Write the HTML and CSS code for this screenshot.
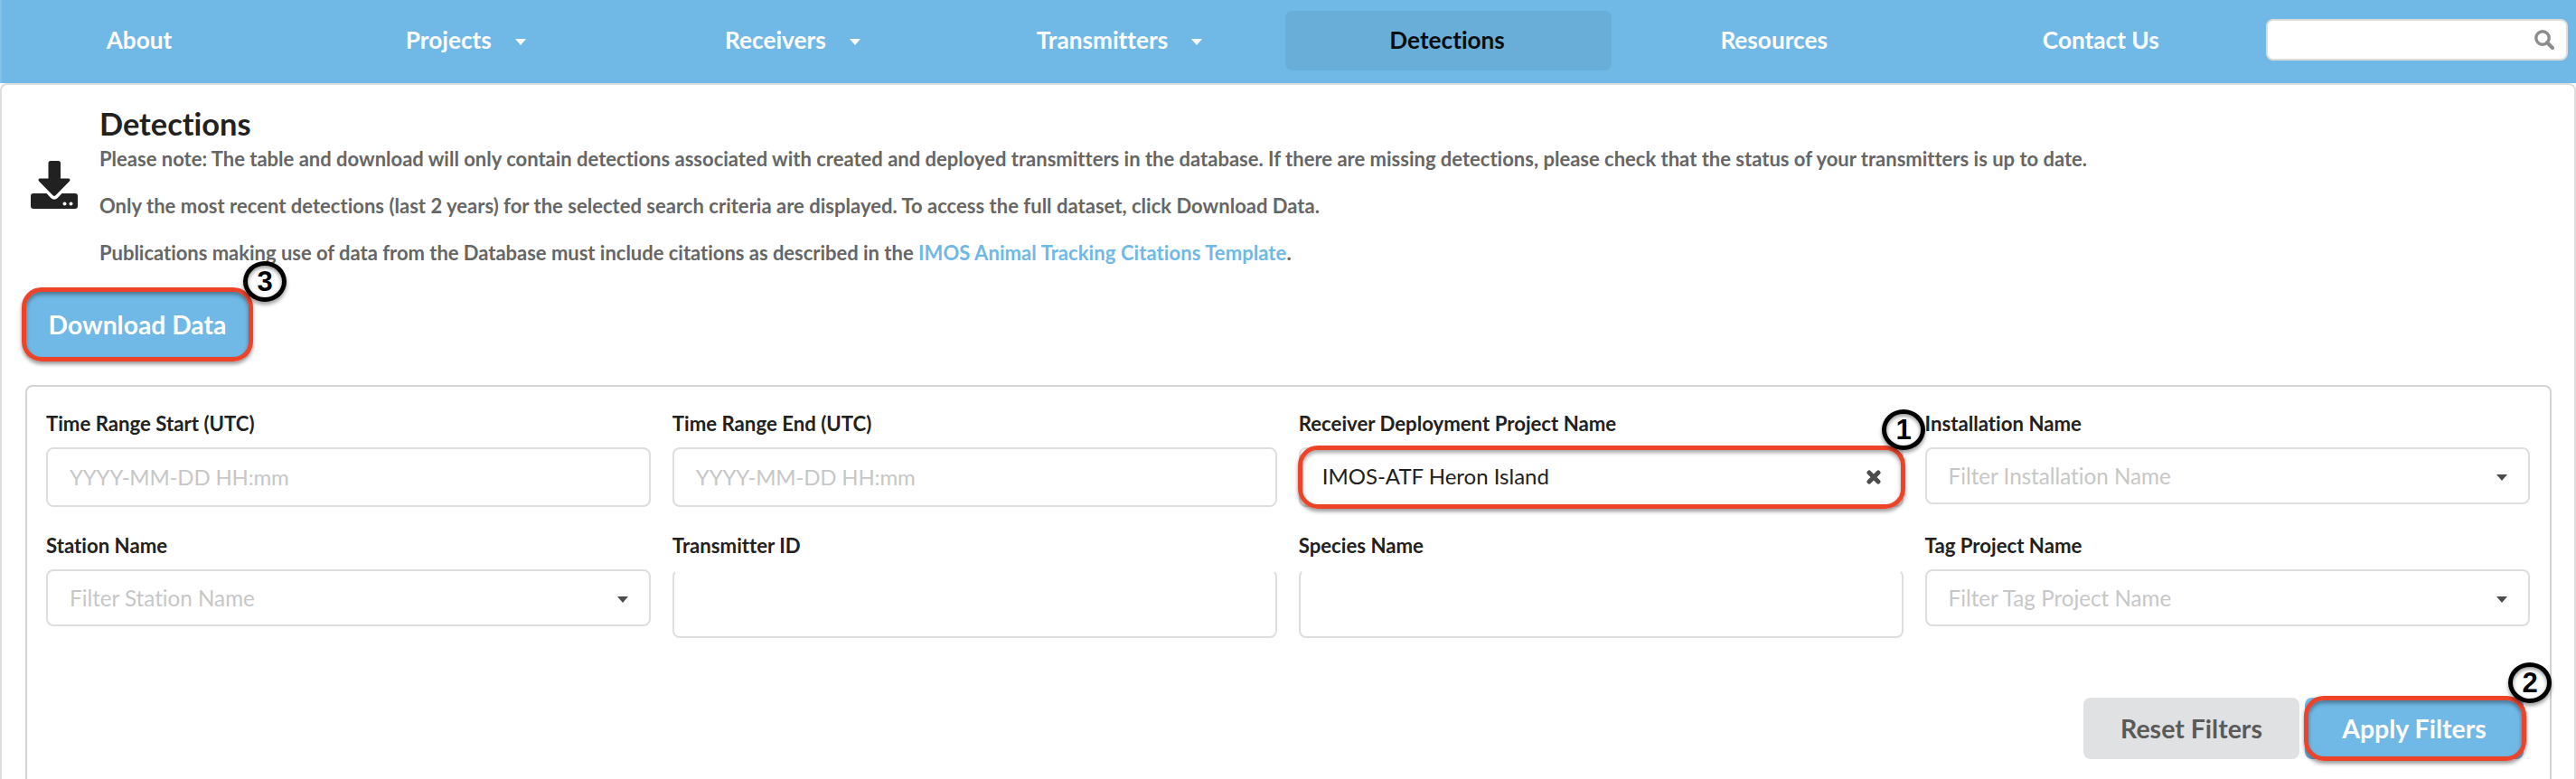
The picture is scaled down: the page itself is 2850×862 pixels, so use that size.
FILE: index.html
```
<!DOCTYPE html>
<html lang="en">
<head>
<meta charset="utf-8">
<title>Detections</title>
<link rel="stylesheet" href="styles.css">
</head>
<body>
<nav class="nav">
  <a class="nav-item nav-first">About</a>
  <a class="nav-item has-menu">Projects<i class="caret"></i></a>
  <a class="nav-item has-menu">Receivers<i class="caret"></i></a>
  <a class="nav-item has-menu">Transmitters<i class="caret"></i></a>
  <a class="nav-item active">Detections</a>
  <a class="nav-item">Resources</a>
  <a class="nav-item">Contact Us</a>
  <div class="search">
    <svg class="search-icon" viewBox="0 0 22 22"><circle cx="9" cy="9" r="7.2" fill="none" stroke="#8c8c8c" stroke-width="3.4"/><path d="M14 14l6 6" stroke="#8c8c8c" stroke-width="4" stroke-linecap="round"/></svg>
  </div>
</nav>
<main class="page">
  <header class="head">
    <svg class="dl-icon" viewBox="0 0 52 53">
      <path d="M3 36h14.5l5 5.2a5 5 0 0 0 7 0l5-5.2H49a3 3 0 0 1 3 3v11a3 3 0 0 1-3 3H3a3 3 0 0 1-3-3V39a3 3 0 0 1 3-3z"/>
      <path d="M22 0h8.500a2.500 2.500 0 0 1 2.500 2.500V19.500h8.700c1.700 0 2.400 1.900 1.200 3.100L27.700 38a2.400 2.400 0 0 1-3.400 0L9.100 22.600c-1.200-1.200-.5-3.100 1.200-3.100h9.200V2.500A2.500 2.500 0 0 1 22 0z"/>
      <circle cx="37.500" cy="47.500" r="2" fill="#fff"/><circle cx="44.500" cy="47.500" r="2" fill="#fff"/>
    </svg>
    <div class="head-text">
      <h1 class="title">Detections</h1>
      <p class="note">Please note: The table and download will only contain detections associated with created and deployed transmitters in the database. If there are missing detections, please check that the status of your transmitters is up to date.</p>
      <p class="note recent">Only the most recent detections (last 2 years) for the selected search criteria are displayed. To access the full dataset, click Download Data.</p>
      <p class="note cite">Publications making use of data from the Database must include citations as described in the <a class="link">IMOS Animal Tracking Citations Template</a>.</p>
    </div>
  </header>
  <div class="marked download">
    <button class="btn primary">Download Data</button>
    <span class="outline"></span><span class="badge">3</span>
  </div>
  <section class="filters">
    <div class="grid">
      <div class="field"><label class="label">Time Range Start (UTC)</label><div class="input">YYYY-MM-DD HH:mm</div></div>
      <div class="field"><label class="label">Time Range End (UTC)</label><div class="input">YYYY-MM-DD HH:mm</div></div>
      <div class="field marked project"><label class="label">Receiver Deployment Project Name</label>
        <div class="input select filled">IMOS-ATF Heron Island<svg class="clear" viewBox="0 0 16 16"><path d="M3 3l10 10M13 3L3 13" stroke="#4d4d4d" stroke-width="5" stroke-linecap="round"/></svg></div>
        <span class="outline"></span><span class="badge">1</span></div>
      <div class="field"><label class="label">Installation Name</label><div class="input select">Filter Installation Name<i class="caret"></i></div></div>
      <div class="field"><label class="label">Station Name</label><div class="input select">Filter Station Name<i class="caret"></i></div></div>
      <div class="field"><label class="label">Transmitter ID</label><div class="input area"></div></div>
      <div class="field"><label class="label">Species Name</label><div class="input area"></div></div>
      <div class="field"><label class="label">Tag Project Name</label><div class="input select">Filter Tag Project Name<i class="caret"></i></div></div>
    </div>
    <div class="actions">
      <button class="btn reset">Reset Filters</button>
      <div class="marked apply"><button class="btn primary">Apply Filters</button><span class="outline"></span><span class="badge">2</span></div>
    </div>
  </section>
</main>
</body>
</html>
```
FILE: styles.css
```
* { box-sizing: border-box; }
body {
  margin: 0;
  background: #fff;
  color: #212121;
  font-family: Lato, "Liberation Sans", sans-serif;
  font-variant-ligatures: none;
}

/* Navigation bar */
.nav {
  display: flex;
  align-items: flex-start;
  height: 92px;
  padding: 12px 9px 0 0;
  background: #70b8e5;
  border-left: 2px solid #84c2e9;
}
.nav-item {
  display: flex;
  align-items: center;
  justify-content: center;
  width: 361.6px;
  height: 66px;
  padding: 0 3px 3px 0;
  border-radius: 8px;
  color: #fff;
  font-size: 26.2px;
  font-weight: 700;
}
.has-menu { padding-right: 5px; }
.nav-first { width: 335px; padding-right: 31px; }
.nav-item.active { background: #69aed9; color: #0b0e10; }
.caret {
  border: 6.5px solid transparent;
  border-top: 7px solid;
  border-bottom: 0;
}
.nav .caret { margin: 5px 0 0 26px; }

.search {
  display: flex;
  align-items: center;
  justify-content: flex-end;
  width: 334px;
  height: 46px;
  margin: 9px 0 0 auto;
  padding-right: 13px;
  background: #fff;
  border: 2px solid #ddd;
  border-radius: 8px;
}
.search-icon { width: 22px; height: 22px; }

/* Page panel */
.page {
  height: 770px;
  padding: 22.5px 25px 0 26px;
  border: 2px solid #ddd;
  border-bottom: 0;
  border-radius: 8px 8px 0 0;
}
.head { display: flex; }
.dl-icon {
  width: 52px;
  height: 53px;
  margin: 61.5px 24px 0 6px;
  fill: #212121;
}
.title { margin: 0 0 6px; font-size: 34.4px; line-height: 40px; }
.note {
  margin: 0 0 26px;
  color: #666;
  font-size: 22px;
  font-weight: 700;
  line-height: 26px;
  white-space: nowrap;
}
.recent { letter-spacing: 0.02px; }
.cite { letter-spacing: -0.02px; }
.link { color: #70b8e5; letter-spacing: 0.08px; }

/* Buttons and numbered markers */
.marked { position: relative; }
.btn {
  display: block;
  height: 68px;
  padding: 0;
  border: 0;
  border-radius: 8px;
  font: 700 28.5px Lato, sans-serif;
  font-variant-ligatures: none;
}
.primary { width: 100%; background: #70b8e5; color: #fff; }
.reset { width: 239px; background: #e0e1e2; color: #5a5a5a; }
.download { width: 248px; margin-top: 4.5px; }
.download .btn { height: 73px; padding-bottom: 2px; font-size: 28.3px; }
.outline {
  position: absolute;
  border: 5px solid #ec4329;
  border-radius: 22px;
  box-shadow: 0 3px 4px rgba(0,0,0,.4), inset 0 3px 4px rgba(0,0,0,.35);
}
.badge {
  position: absolute;
  display: flex;
  align-items: center;
  justify-content: center;
  width: 48px;
  height: 45px;
  border: 5px solid #000;
  border-radius: 50%;
  background: #fff;
  box-shadow: 0 3px 4px rgba(0,0,0,.4), inset 0 2px 4px rgba(0,0,0,.45);
  color: #000;
  font: 700 31px "Liberation Sans", sans-serif;
}
.download .outline { inset: -5px -4px -4px -4px; }
.download .badge { left: 241px; top: -34px; }

/* Filter form */
.filters {
  height: 436px;
  margin-top: 30px;
  padding: 28px 22px 0 21px;
  border: 2px solid #d4d4d5;
  border-bottom: 0;
  border-radius: 8px 8px 0 0;
}
.grid {
  display: grid;
  grid-template-columns: repeat(4, 1fr);
  grid-template-rows: 105px 116px;
  gap: 30px 23.4px;
}
.label {
  display: block;
  margin-bottom: 13px;
  font-size: 22.2px;
  font-weight: 700;
  line-height: 26px;
}
.input {
  display: flex;
  align-items: center;
  justify-content: space-between;
  height: 66px;
  padding: 0 24px 2px;
  background: #fff;
  border: 2px solid #dedede;
  border-radius: 8px;
  color: #c7c7c7;
  font-size: 24px;
  letter-spacing: -0.18px;
}
.select {
  height: 63px;
  padding: 0 23px 1px 24px;
  font-size: 24.2px;
  letter-spacing: 0;
}
.select .caret { margin-top: 5px; color: #4d4d4d; border-width: 7px 6px 0; }
.filled { height: 66px; padding-bottom: 4px; color: #212121; font-size: 24px; }
.clear { width: 16px; height: 16px; margin-top: 3px; }
.area { height: 76px; border-top-color: transparent; }
.project .outline { left: -1px; right: -2px; top: 37px; height: 70px; }
.project .badge { right: -24px; top: -3px; }

.actions { display: flex; justify-content: flex-end; gap: 6px; margin: 65px 7px 0 0; }
.apply { width: 242px; }
.apply .outline { inset: -2px -3px -2px -1px; }
.apply .badge { right: -31px; top: -39px; }
```
